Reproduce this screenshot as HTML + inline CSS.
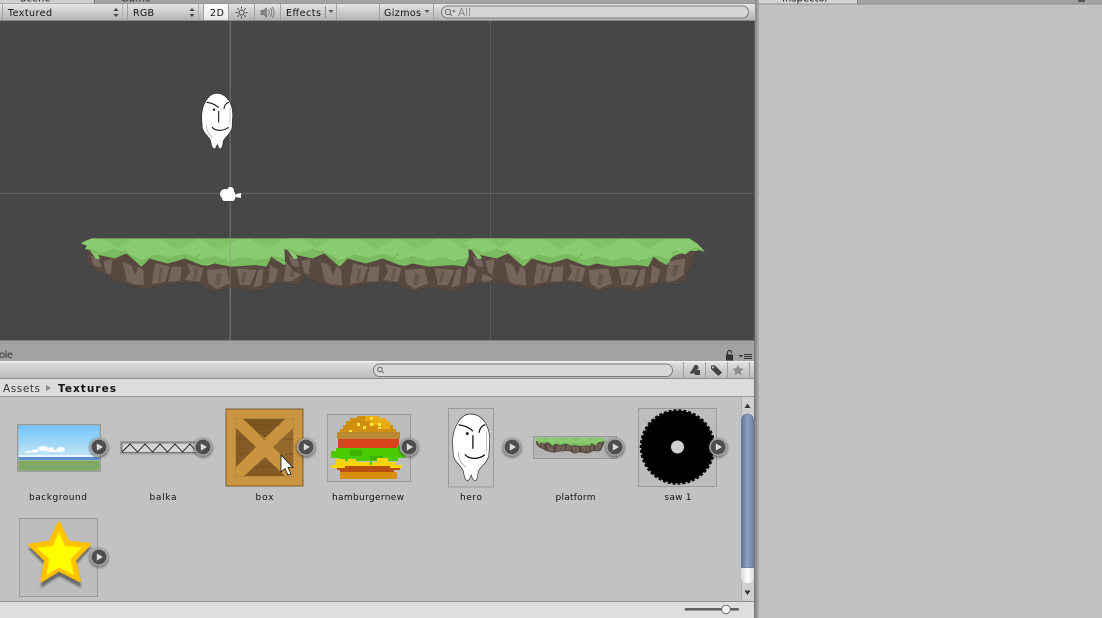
<!DOCTYPE html>
<html><head><meta charset="utf-8"><style>
html,body{margin:0;padding:0;background:#c2c2c2;width:1102px;height:618px;overflow:hidden}
svg{display:block}
text{font-family:"DejaVu Sans","Liberation Sans",sans-serif}
</style></head><body>
<svg width="1102" height="618" viewBox="0 0 1102 618" xmlns="http://www.w3.org/2000/svg" fill="#111">
<defs>
<linearGradient id="tb" x1="0" y1="0" x2="0" y2="1"><stop offset="0" stop-color="#e4e4e4"/><stop offset="1" stop-color="#b4b4b4"/></linearGradient>
<linearGradient id="tb2" x1="0" y1="0" x2="0" y2="1"><stop offset="0" stop-color="#dedede"/><stop offset="1" stop-color="#bcbcbc"/></linearGradient>
<linearGradient id="on" x1="0" y1="0" x2="0" y2="1"><stop offset="0" stop-color="#fff"/><stop offset="1" stop-color="#e6e6e6"/></linearGradient>
<linearGradient id="sky" x1="0" y1="0" x2="0" y2="1"><stop offset="0" stop-color="#72c4fa"/><stop offset="1" stop-color="#bfe4f6"/></linearGradient>
<linearGradient id="sb" x1="0" y1="0" x2="1" y2="0"><stop offset="0" stop-color="#5f7599"/><stop offset=".5" stop-color="#8da2c4"/><stop offset="1" stop-color="#6a80a4"/></linearGradient>
<linearGradient id="sw" x1="0" y1="0" x2="1" y2="0"><stop offset="0" stop-color="#d8d8d8"/><stop offset=".5" stop-color="#fff"/><stop offset="1" stop-color="#dcdcdc"/></linearGradient>
<filter id="sh" x="-30%" y="-30%" width="160%" height="160%"><feGaussianBlur stdDeviation="1.1"/></filter>

<g id="tile">
<path fill="#57493f" stroke="#403c38" stroke-width="1.500" d="M50,72 52,110 62,118 75,135 100,148 112,152 130,165 165,178 205,187 235,190 270,183 300,178 320,175 385,175 410,190 435,200 475,188 510,190 555,200 590,190 620,175 680,178 700,165 712,135 720,120 735,80Z"/>
<g fill="#75655a">
<path d="M62,92 88,102 95,128 72,122Z"/>
<path d="M100,108 128,100 122,150 108,142Z"/>
<path d="M158,110 185,122 195,150 205,125 220,135 222,180 190,178 170,168Z"/>
<path d="M255,115 300,125 285,170 245,178Z"/>
<path d="M305,125 335,125 330,168 295,170Z"/>
<path d="M350,115 400,130 390,170 345,165 360,140Z"/>
<path d="M410,135 470,130 480,175 440,192 415,175Z"/>
<path d="M500,130 560,135 540,180 510,180Z"/>
<path d="M565,135 580,130 575,180 550,188Z"/>
<path d="M600,120 625,135 615,170 595,175Z"/>
<path d="M650,110 700,100 695,150 665,168 640,170Z"/>
</g>
<path fill="#65574a" d="M270,130 280,130 272,170 264,170Z M375,130 385,130 378,165 368,165Z M440,145 455,145 450,180 435,180Z M520,140 530,140 522,175 512,175Z M665,120 680,120 672,155 658,155Z"/>
<path fill="#8aca70" d="M33,55 45,48 65,40 712,40 735,55 759,80 740,75 734,78 714,78 700,88 689,85 672,88 664,90 655,105 644,120 622,108 604,95 597,110 589,125 570,118 554,120 520,122 484,125 458,120 434,115 412,122 394,120 370,105 344,100 320,108 294,115 265,108 239,100 228,112 214,125 195,105 169,85 150,92 134,100 110,92 84,90 90,100 78,102 59,75 45,72 50,62Z"/>
<path fill="#79bb5e" d="M60,70 95,85 130,72 170,82 215,105 260,88 300,98 345,85 395,105 430,92 480,108 520,95 565,108 610,92 650,102 700,78 735,68 759,80 740,75 714,78 689,85 664,90 644,120 604,95 589,125 554,120 484,125 434,115 394,120 344,100 294,115 239,100 214,125 169,85 134,100 84,90 59,75 45,72Z"/>
<path fill="#81c267" d="M100,41 145,70 190,41Z M270,41 325,74 385,41Z M390,41 445,74 510,41Z M540,41 590,72 645,41Z"/>
<path fill="none" stroke="#9ad582" stroke-width="2" d="M195,88 210,74 M220,85 235,70 M270,90 285,74 M300,92 315,78 M420,98 435,85 M470,104 490,85 M520,100 540,85 M600,85 620,72 M670,80 690,68"/>
<path fill="none" stroke="#66a44e" stroke-width="2" d="M150,85 168,78 M375,98 392,88 M455,110 470,100 M560,112 575,102 M660,84 680,78"/>
</g>

<g id="face">
<path fill="#fff" stroke="#222" stroke-width="1.600" d="M110,25C84,25 66,60 65,95L67,128C70,146 86,152 92,168C94,180 96,190 103,192C108,190 109,184 112,178C114,186 117,192 122,192C128,188 128,176 130,168C136,154 152,148 156,128L158,90C158,55 140,25 110,25Z"/>
<path fill="none" stroke="#111" stroke-width="3.200" d="M80,52C96,54 108,60 116,68M132,72C132,62 138,54 147,52M116,78V112M96,126C105,138 128,140 146,127"/>
<circle cx="102" cy="74" r="3.600" fill="#111"/>
<path fill="none" stroke="#aaa" stroke-width="2" d="M150,70V118M80,120C78,138 88,148 98,158"/>
</g>

<g id="pb">
<circle r="10" cy="1" fill="#333" opacity=".45" filter="url(#sh)"/>
<circle r="8.800" fill="#a8a8a8"/>
<circle r="7.400" fill="#4e4e4e"/>
<path d="M-2.200,-3.600 4,0 -2.200,3.600Z" fill="#dcdcdc"/>
</g>
</defs>

<!-- base -->
<rect width="1102" height="618" fill="#c2c2c2"/>

<!-- top tabs -->
<rect x="0" y="0" width="755" height="4" fill="#a2a2a2"/>
<rect x="0" y="0" width="94" height="3.500" fill="#cfcfcf"/>
<rect x="94" y="0" width="1" height="4" fill="#808080"/>
<text x="20" y="1.500" font-size="10" fill="#222">Scene</text>
<text x="121" y="1.500" font-size="10" fill="#333">Game</text>
<rect x="0" y="3.500" width="755" height="1" fill="#8c8c8c"/>

<!-- scene toolbar -->
<rect x="0" y="4" width="755" height="16" fill="url(#tb)"/>
<rect x="0" y="20" width="755" height="1" fill="#8a8a8a"/>
<g fill="#a0a0a0">
<rect x="2" y="4" width="1" height="16"/><rect x="122" y="4" width="1" height="16" opacity=".7"/><rect x="127" y="4" width="1" height="16"/><rect x="198" y="4" width="1" height="16" opacity=".7"/><rect x="203" y="4" width="1" height="16"/><rect x="254" y="4" width="1" height="16"/><rect x="280" y="4" width="1" height="16"/><rect x="336" y="4" width="1" height="16"/><rect x="379" y="4" width="1" height="16"/><rect x="433" y="4" width="1" height="16"/><rect x="325" y="6" width="1" height="12" fill="#8f8f8f"/>
</g>
<rect x="204" y="4" width="24" height="16" fill="url(#on)"/>
<rect x="228" y="4" width="1" height="16" fill="#a0a0a0"/>
<text x="8" y="16" font-size="9.500" textLength="44" lengthAdjust="spacing">Textured</text>
<path d="M113.500,11 116,8 118.500,11ZM113.500,14 116,17 118.500,14Z" fill="#444"/>
<text x="133" y="16" font-size="9.500" textLength="21" lengthAdjust="spacing">RGB</text>
<path d="M189.500,11 192,8 194.500,11ZM189.500,14 192,17 194.500,14Z" fill="#444"/>
<text x="210" y="16" font-size="9.500" textLength="14" lengthAdjust="spacing">2D</text>
<g stroke="#444" stroke-width="1" fill="none"><circle cx="241.500" cy="12.500" r="2.500"/><path d="M241.500,6.500v2M241.500,16.500v2M235.500,12.500h2M245.500,12.500h2M237.300,8.300l1.400,1.400M244.300,15.300l1.400,1.400M237.300,16.700l1.400,-1.400M244.300,9.700l1.400,-1.400"/></g>
<path d="M261,10.500h2.500l3,-2.500v9l-3,-2.500H261Z" fill="#8a8a8a" stroke="#666" stroke-width=".7"/>
<path d="M268.500,9.500q1.500,3 0,6M270.500,8q2.500,4.500 0,9M272.500,7q3,5.500 0,11" fill="none" stroke="#777"/>
<text x="286" y="16" font-size="9.500" textLength="35" lengthAdjust="spacing">Effects</text>
<path d="M328.500,10h5l-2.500,3Z" fill="#555"/>
<text x="384" y="16" font-size="9.500" textLength="37" lengthAdjust="spacing">Gizmos</text>
<path d="M424.500,10h5l-2.500,3Z" fill="#555"/>
<rect x="441.500" y="6" width="307" height="12" rx="6" fill="#d6d6d6" stroke="#7c7c7c"/>
<circle cx="448" cy="12" r="2.600" fill="none" stroke="#666"/><path d="M450,14l2,2" stroke="#666"/><path d="M452,10.500h3.600l-1.800,2.200Z" fill="#666"/>
<text x="458" y="16" font-size="11" fill="#8a8a8a" textLength="13" lengthAdjust="spacingAndGlyphs">All</text>

<!-- scene -->
<rect x="0" y="21" width="755" height="319" fill="#474747"/>
<rect x="0" y="193" width="755" height="1" fill="#606060"/>
<rect x="229.500" y="21" width="1.500" height="319" fill="#656565"/>
<rect x="490" y="21" width="1" height="319" fill="#5e5e5e"/>

<!-- platforms -->
<g transform="translate(70,225) scale(.33333)"><use href="#tile"/></g>
<g transform="translate(268,225) scale(.33333)"><use href="#tile"/></g>
<g transform="translate(452,225) scale(.33333)"><use href="#tile"/></g>
<rect x="229.500" y="238" width="1.500" height="60" fill="#8a8a8a" opacity=".3"/>

<!-- hero in scene -->
<g transform="translate(180,85) scale(.33333)"><use href="#face"/></g>
<!-- camera -->
<g fill="#fff"><circle cx="230.500" cy="190.500" r="3.500"/><circle cx="225" cy="194" r="5"/><rect x="222" y="191" width="13" height="10" rx="2.500"/><path d="M235,194.500l6,-1.500v5l-6,-1Z"/></g>

<!-- right panel -->
<rect x="755" y="0" width="347" height="618" fill="#c2c2c2"/>
<rect x="759" y="0" width="347" height="3.500" fill="#a2a2a2"/>
<rect x="759" y="0" width="98" height="3.500" fill="#d4d4d4"/>
<rect x="857" y="0" width="1" height="4" fill="#808080"/>
<text x="782" y="1.500" font-size="10" fill="#111">Inspector</text>
<rect x="759" y="3.500" width="343" height="1" fill="#8e8e8e"/>
<rect x="1078" y="0" width="7" height="2" fill="#555"/>

<!-- splitter -->
<rect x="755" y="0" width="2" height="618" fill="#8e8e8e"/>
<rect x="757" y="0" width="2" height="618" fill="#a6a6a6"/>
<rect x="754" y="21" width="1" height="319" fill="#5e5e5e"/>

<!-- project tab bar -->
<rect x="0" y="340" width="755" height="21" fill="#a2a2a2"/>
<rect x="0" y="340" width="755" height="1" fill="#7e7e7e"/>
<text x="-1" y="358" font-size="10" fill="#333" textLength="14" lengthAdjust="spacing">ole</text>
<path d="M726,354.500h7v6h-7Z" fill="#333"/><path d="M727.500,354.500v-2a2,2 0 0 1 4,0v.5" fill="none" stroke="#333" stroke-width="1.200"/>
<path d="M738.500,355h4.500l-2.200,2.500Z" fill="#333"/>
<path d="M744,354.500h8M744,356.500h8M744,358.500h8" stroke="#333" stroke-width="1"/>

<!-- project toolbar -->
<rect x="0" y="361" width="755" height="1.500" fill="#f2f2f2"/>
<rect x="0" y="362.500" width="755" height="15.500" fill="url(#tb2)"/>
<rect x="0" y="378" width="755" height="1" fill="#8e8e8e"/>
<rect x="373.500" y="364" width="299" height="12.500" rx="6.200" fill="#d8d8d8" stroke="#7c7c7c"/>
<circle cx="380" cy="369.500" r="2.300" fill="none" stroke="#666"/><path d="M381.800,371.300l1.800,1.800" stroke="#666"/>
<g fill="#a0a0a0"><rect x="683" y="362" width="1" height="16"/><rect x="705" y="362" width="1" height="16"/><rect x="727" y="362" width="1" height="16"/><rect x="749" y="362" width="1" height="16"/></g>
<path d="M689.500,373.500l4,-6 2.500,3v3Z" fill="#444"/><circle cx="696" cy="367.500" r="2.500" fill="#444"/><rect x="695" y="370" width="5" height="5" fill="#444"/>
<path d="M711,365.500h4l7,7 -3.500,3.500 -7.500,-7Z" fill="#444"/><circle cx="713" cy="367.500" r="1" fill="#ddd"/>
<path d="M738,364.500l1.700,3.800 4.100,.4 -3.100,2.700 .9,4.100 -3.600,-2.200 -3.600,2.200 .9,-4.100 -3.100,-2.700 4.100,-.4Z" fill="#8f8f8f"/>

<!-- breadcrumb -->
<rect x="0" y="379" width="755" height="17" fill="#dcdcdc"/>
<rect x="0" y="396" width="755" height="1" fill="#9a9a9a"/>
<text x="3" y="392" font-size="10.500" fill="#333" textLength="37" lengthAdjust="spacing">Assets</text>
<path d="M46,385l5,3 -5,3Z" fill="#8a8a8a"/>
<text x="58" y="392" font-size="10.500" font-weight="700" fill="#111" textLength="58" lengthAdjust="spacing">Textures</text>

<!-- grid -->
<rect x="0" y="397" width="741" height="204.500" fill="#c2c2c2"/>

<!-- background thumb -->
<rect x="17.500" y="424.500" width="83" height="47" fill="#aaa" stroke="#9a9a9a"/>
<rect x="18.500" y="425.500" width="81" height="30" fill="url(#sky)"/>
<g fill="#fff"><ellipse cx="35" cy="451" rx="4" ry="1.600"/><ellipse cx="43" cy="448.500" rx="5" ry="2.400"/><ellipse cx="51" cy="449" rx="3" ry="1.600"/><ellipse cx="61" cy="449" rx="4" ry="2"/><ellipse cx="28" cy="452" rx="3" ry="1"/><ellipse cx="55" cy="451" rx="10" ry="1"/></g>
<rect x="18.500" y="455" width="81" height="2" fill="#e8f4fa"/>
<rect x="18.500" y="457" width="81" height="3" fill="#5f8fd0"/>
<rect x="18.500" y="460" width="81" height="10.500" fill="#7fa864"/>
<rect x="18.500" y="460" width="81" height="1" fill="#9ab87f"/>

<!-- balka thumb -->
<rect x="120.500" y="441.500" width="77" height="12.500" fill="#ababab" stroke="#9a9a9a"/>
<rect x="122" y="443" width="74" height="9.500" fill="#d4d4d4" stroke="#555" stroke-width=".7"/>
<path d="M122,452 130,444 137.500,452 145,444 152.500,452 160,444 167.500,452 175,444 182.500,452 190,444 196,451" fill="none" stroke="#111" stroke-width=".9"/>

<!-- box thumb -->
<rect x="226" y="409" width="77" height="77" fill="#c99542" stroke="#7d5c2c"/>
<rect x="235.500" y="418.500" width="58" height="58" fill="#c8943f" stroke="#b98a3c"/>
<path d="M243,419 285,419 265,438Z" fill="#7e5620"/>
<path d="M236,428 236,467 256,447Z" fill="#855b23"/>
<path d="M293,428 293,467 273,447Z" fill="#94682b"/>
<path d="M244,476 285,476 265,457Z" fill="#855b23"/>
<g stroke="#6f4c1c" stroke-width=".8" fill="none"><path d="M249,425H280M236,439H245M236,454H243M282,439H293M285,454H293M255,467H276"/><path d="M245,419 265,440"/></g>

<!-- hamburger thumb -->
<rect x="327.500" y="414.500" width="83" height="67" fill="#bdbdbd" stroke="#9a9a9a"/>
<g shape-rendering="crispEdges">
<path d="M337,433H340V429H343V425H346V421H350V418H357V416H379V418H386V421H390V425H393V429H396V433H399V439H337Z" fill="#d08f10"/>
<path d="M365,416H379V418H386V421H390V429H380V425H370V421H365Z" fill="#e8ab14"/>
<g fill="#ffe93a"><rect x="357" y="423" width="3" height="3"/><rect x="370" y="417" width="3" height="2.500"/><rect x="370" y="423" width="3.500" height="3"/><rect x="378" y="423" width="3" height="3"/><rect x="363" y="426" width="3" height="3"/><rect x="349" y="430" width="3" height="3"/><rect x="378" y="427" width="3" height="2"/></g>
<rect x="337" y="432" width="63" height="7" fill="#b98a32"/>
<rect x="338" y="439" width="61" height="10" fill="#d8431e"/>
<rect x="340" y="472" width="57" height="7" fill="#d88f08"/>
<path d="M337,465H400V470H394V472H340V470H337Z" fill="#b84f10"/>
<path d="M331,468V465H336V462H396V465H402V468H390V466H345V468Z" fill="#ffd400"/>
<path d="M331,451H336V448H397V446H400V452H405V458H398V461H372V465H370V461H340V458H331Z" fill="#4acb00"/>
<path d="M350,450H362V456H350ZM370,456H382V460H370Z" fill="#3eb000"/>
<path d="M336,459H345V462H336ZM348,459H356V462H348ZM377,458H388V462H377Z" fill="#ffd400"/>
</g>

<!-- hero thumb -->
<rect x="448.500" y="408.500" width="45" height="78.500" fill="#c0c0c0" stroke="#9a9a9a"/>
<g transform="translate(452.500,414) scale(.4) translate(-65,-25)"><use href="#face"/></g>

<!-- platform thumb -->
<rect x="533.500" y="436.500" width="83" height="22" fill="#b4b4b4" stroke="#9a9a9a"/>
<g transform="translate(534.500,437.500) scale(.1) translate(-33,-40)"><use href="#tile"/></g>

<!-- saw thumb -->
<rect x="638.500" y="408.500" width="78" height="78" fill="#bdbdbd" stroke="#9a9a9a"/>
<circle cx="677.500" cy="447" r="36.300" fill="#000"/>
<circle cx="677.500" cy="447" r="37" fill="none" stroke="#000" stroke-width="1.600" stroke-dasharray="3 2"/>
<circle cx="677.500" cy="447" r="6.500" fill="#cfcfcf"/>

<!-- star thumb -->
<rect x="19.500" y="518.500" width="78" height="78" fill="#bdbdbd" stroke="#9a9a9a"/>
<path d="M59,526 68,545 90,548 75,564 80,586 59,575 42,586 45,564 30,549 50,545Z" fill="#333" filter="url(#sh)" opacity=".6" stroke="#333" stroke-width="2"/>
<path d="M59,523 68,542 89.500,544.500 74.500,560 79.500,580.500 59,570 42,580.500 45.500,560 30,545 50,542Z" fill="#ffc600" stroke="#ffc000" stroke-width="3" stroke-linejoin="round"/>
<path d="M59,532 65,546 81.500,547.500 70.500,559 74,575 59,567.500 46.500,575 49.500,559 37,548 53,546Z" fill="#ffff00"/>

<!-- play buttons -->
<use href="#pb" x="99" y="447"/><use href="#pb" x="203" y="447"/><use href="#pb" x="306" y="447"/><use href="#pb" x="409" y="447"/><use href="#pb" x="512" y="447"/><use href="#pb" x="615" y="447"/><use href="#pb" x="718" y="447"/><use href="#pb" x="99" y="557"/>

<!-- cursor -->
<path d="M281,455V472L285,468.500 288,475 291,474 288,467.500H293Z" fill="#fff" stroke="#111" stroke-width=".8"/>

<!-- labels -->
<g font-size="9" fill="#111">
<text x="29" y="500" textLength="58" lengthAdjust="spacing">background</text>
<text x="149.500" y="500" textLength="27" lengthAdjust="spacing">balka</text>
<text x="255.500" y="500" textLength="18" lengthAdjust="spacing">box</text>
<text x="332" y="500" textLength="72" lengthAdjust="spacing">hamburgernew</text>
<text x="460" y="500" textLength="22" lengthAdjust="spacing">hero</text>
<text x="555.500" y="500" textLength="40" lengthAdjust="spacing">platform</text>
<text x="664.500" y="500" textLength="27" lengthAdjust="spacing">saw 1</text>
</g>

<!-- scrollbar -->
<rect x="741" y="397" width="13" height="205" fill="#cfcfcf"/>
<rect x="741" y="397" width="1" height="205" fill="#b2b2b2"/>
<path d="M744.500,408l3,-4.500 3,4.500Z" fill="#333"/>
<path d="M741.500,420a6,6 0 0 1 12,0V568H741.500Z" fill="url(#sb)" stroke="#56688a" stroke-width=".6"/>
<path d="M741,568H754V577a6.500,6 0 0 1 -13,0Z" fill="url(#sw)"/>
<path d="M744.500,590.500h6l-3,4.500Z" fill="#333"/>

<!-- bottom bar -->
<rect x="0" y="601" width="755" height="1" fill="#8e8e8e"/>
<rect x="0" y="602" width="755" height="16" fill="#dedede"/>
<rect x="684.500" y="608" width="54.500" height="3" rx="1.500" fill="#5e5e5e"/>
<rect x="684.500" y="610" width="54.500" height="1" rx=".5" fill="#9a9a9a"/>
<circle cx="726" cy="609.500" r="4.300" fill="#f4f4f4" stroke="#666" stroke-width=".8"/>
<rect x="754" y="340" width="1" height="278" fill="#777"/>
</svg>
</body></html>
